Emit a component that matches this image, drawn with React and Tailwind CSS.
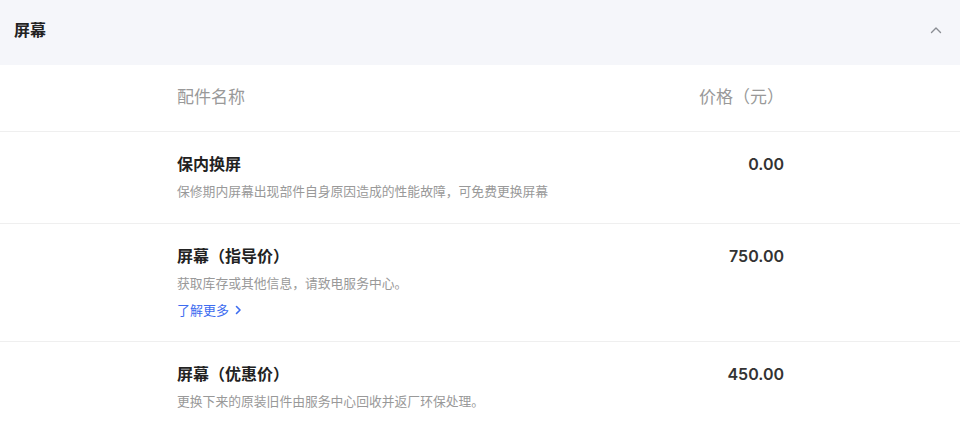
import React from "react";

const rows = [
  {
    title: "保内换屏",
    desc: "保修期内屏幕出现部件自身原因造成的性能故障，可免费更换屏幕",
    price: "0.00",
  },
  {
    title: "屏幕（指导价）",
    desc: "获取库存或其他信息，请致电服务中心。",
    price: "750.00",
    link: true,
  },
  {
    title: "屏幕（优惠价）",
    desc: "更换下来的原装旧件由服务中心回收并返厂环保处理。",
    price: "450.00",
  },
];

function ChevronUp() {
  return (
    <svg width="14" height="14" viewBox="0 0 14 14" fill="none">
      <path d="M2.5 9.5L7 5L11.5 9.5" stroke="#8a8d93" strokeWidth="1.4" strokeLinecap="round" strokeLinejoin="round" />
    </svg>
  );
}

function ChevronRight() {
  return (
    <svg width="8" height="10" viewBox="0 0 8 10" fill="none" className="ml-[5px]">
      <path d="M2.5 1.5L6 5L2.5 8.5" stroke="#3d6cf0" strokeWidth="1.6" strokeLinecap="round" strokeLinejoin="round" />
    </svg>
  );
}

export default function App() {
  return (
    <div
      className="w-[960px] h-[428px] overflow-hidden bg-white text-[#333]"
      style={{ fontFamily: 'Inter, "Noto Sans CJK SC", sans-serif' }}
    >
      {/* Collapsible header */}
      <div className="h-[65px] bg-[#f5f6fa] flex items-center justify-between pl-[14px] pr-[17px] pb-[5px]">
        <span className="text-[16px] font-bold text-[#222]">屏幕</span>
        <ChevronUp />
      </div>

      {/* Table */}
      <div className="pl-[177px] pr-[176px]">
        <div className="h-[66px] flex items-center justify-between text-[17px] text-[#999]">
          <span>配件名称</span>
          <span>价格（元）</span>
        </div>

        {rows.map((r) => (
          <div
            key={r.title}
            className="border-t border-[#efefef] flex justify-between pt-5 pb-[21px] -ml-[177px] pl-[177px] -mr-[176px] pr-[176px]"
          >
            <div className="flex flex-col">
              <div className="text-[16px] leading-6 font-bold text-[#222]">{r.title}</div>
              <div className="mt-[6px] text-[12.8px] leading-5 text-[#999]">{r.desc}</div>
              {r.link && (
                <div className="mt-[6px] flex items-center text-[13px] leading-5 text-[#3d6cf0]">
                  了解更多
                  <ChevronRight />
                </div>
              )}
            </div>
            <div className="text-[16px] leading-6 font-semibold text-[#333]">{r.price}</div>
          </div>
        ))}
      </div>
    </div>
  );
}
